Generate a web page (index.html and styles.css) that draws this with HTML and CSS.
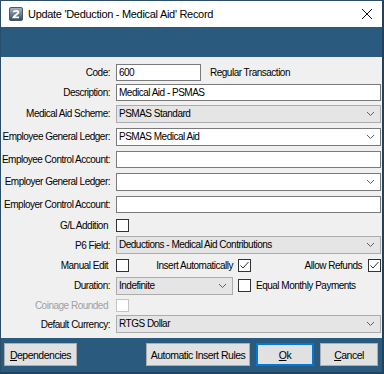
FILE: index.html
```html
<!DOCTYPE html>
<html lang="en">
<head>
  <meta charset="UTF-8">
  <title>Update 'Deduction - Medical Aid' Record</title>
  <link rel="stylesheet" href="styles.css">
</head>
<body>
  <div class="window">
    <div class="titlebar">
      <svg class="app-icon" width="14" height="14" viewBox="0 0 14 14">
        <defs>
          <linearGradient id="ig" x1="0" y1="0" x2="0" y2="1">
            <stop offset="0" stop-color="#a9b6c4"/>
            <stop offset="1" stop-color="#33475c"/>
          </linearGradient>
        </defs>
        <rect x="0.5" y="0.5" width="13" height="13" rx="1.5" fill="url(#ig)" stroke="#4a5a6b"/>
        <path d="M4.5 5.2 C5 3.4 9.6 3.2 9.4 5.4 C9.2 7 6 7.8 4.6 10.3 L10 10.3" fill="none" stroke="#fff" stroke-width="1.8"/>
      </svg>
      <span class="title">Update 'Deduction - Medical Aid' Record</span>
      <svg class="close" width="12" height="12" viewBox="0 0 12 12">
        <path d="M1 1 L11 11 M11 1 L1 11" stroke="#111" stroke-width="1"/>
      </svg>
    </div>
    <div class="banner"></div>

    <div class="record-form">
      <span class="lbl">Code:</span>
      <div class="field">
        <span class="txt code">600</span>
        <span class="note">Regular Transaction</span>
      </div>

      <span class="lbl">Description:</span>
      <div class="field"><span class="txt wide">Medical Aid - PSMAS</span></div>

      <span class="lbl">Medical Aid Scheme:</span>
      <div class="field">
        <div class="combo gray wide">PSMAS Standard<svg class="chev" width="7" height="4" viewBox="0 0 7 4"><path d="M0 0 L3.5 3.5 L7 0" fill="none" stroke="#606060"/></svg></div>
      </div>

      <span class="lbl">Employee General Ledger:</span>
      <div class="field">
        <div class="combo wide">PSMAS Medical Aid<svg class="chev" width="7" height="4" viewBox="0 0 7 4"><path d="M0 0 L3.5 3.5 L7 0" fill="none" stroke="#606060"/></svg></div>
      </div>

      <span class="lbl">Employee Control Account:</span>
      <div class="field"><span class="txt wide"></span></div>

      <span class="lbl">Employer General Ledger:</span>
      <div class="field">
        <div class="combo wide"><svg class="chev" width="7" height="4" viewBox="0 0 7 4"><path d="M0 0 L3.5 3.5 L7 0" fill="none" stroke="#606060"/></svg></div>
      </div>

      <span class="lbl">Employer Control Account:</span>
      <div class="field"><span class="txt wide"></span></div>

      <span class="lbl chk-lbl">G/L Addition</span>
      <div class="field"><span class="chk"></span></div>

      <span class="lbl">P6 Field:</span>
      <div class="field">
        <div class="combo gray wide">Deductions - Medical Aid Contributions<svg class="chev" width="7" height="4" viewBox="0 0 7 4"><path d="M0 0 L3.5 3.5 L7 0" fill="none" stroke="#606060"/></svg></div>
      </div>

      <span class="lbl chk-lbl">Manual Edit</span>
      <div class="field split">
        <div class="pair">
          <span class="chk"></span>
          <span>Insert Automatically</span>
        </div>
        <div class="pair">
          <span class="chk on"><svg width="11" height="11" viewBox="0 0 11 11"><path d="M1.5 5.5 L4 8 L9.5 2" fill="none" stroke="#333" stroke-width="1"/></svg></span>
          <span class="refunds">Allow Refunds <span class="chk on"><svg width="11" height="11" viewBox="0 0 11 11"><path d="M1.5 5.5 L4 8 L9.5 2" fill="none" stroke="#333" stroke-width="1"/></svg></span></span>
        </div>
      </div>

      <span class="lbl">Duration:</span>
      <div class="field split">
        <div class="combo gray">Indefinite<svg class="chev" width="7" height="4" viewBox="0 0 7 4"><path d="M0 0 L3.5 3.5 L7 0" fill="none" stroke="#606060"/></svg></div>
        <div class="pair start">
          <span class="chk"></span>
          <span>Equal Monthly Payments</span>
        </div>
      </div>

      <span class="lbl chk-lbl disabled">Coinage Rounded</span>
      <div class="field"><span class="chk off"></span></div>

      <span class="lbl">Default Currency:</span>
      <div class="field">
        <div class="combo gray wide">RTGS Dollar<svg class="chev" width="7" height="4" viewBox="0 0 7 4"><path d="M0 0 L3.5 3.5 L7 0" fill="none" stroke="#606060"/></svg></div>
      </div>
    </div>

    <div class="button-bar">
      <button class="btn deps"><u>D</u>ependencies</button>
      <span class="spacer"></span>
      <button class="btn rules">Automatic Insert Rules</button>
      <button class="btn ok"><u>O</u>k</button>
      <button class="btn cancel"><u>C</u>ancel</button>
    </div>
  </div>
</body>
</html>
```

FILE: styles.css
```css
* {
  margin: 0;
  padding: 0;
  box-sizing: border-box;
}

body {
  font-family: "Liberation Sans", Arial, sans-serif;
  font-size: 10px;
  letter-spacing: -0.5px;
  color: #000;
  background: #1f4a6b;
}

.window {
  width: 384px;
  height: 374px;
  border-top: 1px solid #2a4d6a;
  border-left: 1px solid #2a4d6a;
  border-right: 2px solid #22415b;
  border-bottom: 2px solid #22415b;
  display: flex;
  flex-direction: column;
  background: #f0f0f0;
}

.titlebar {
  height: 26px;
  background: #fff;
  display: flex;
  align-items: center;
  padding-left: 8px;
}

.app-icon {
  flex: none;
}

.title {
  margin-left: 5px;
  font-size: 11px;
  letter-spacing: -0.3px;
  flex: 1;
}

.close {
  margin-right: 9px;
}

.banner {
  height: 30px;
  background: #2a5a7e;
}

.record-form {
  display: grid;
  grid-template-columns: 109px 1fr;
  grid-template-rows: 20px 20px 23px 23px 22px 23px 22px 20px 20px 21px 19px 20px 18px;
  column-gap: 6px;
  padding: 5px 1px 5px 0;
  height: 281px;
}

.lbl {
  text-align: right;
  align-self: center;
  white-space: nowrap;
}

.chk-lbl {
  padding-right: 2px;
}

.disabled {
  color: #a0a0a0;
}

.field {
  display: flex;
  align-items: center;
  white-space: nowrap;
}

.txt {
  display: block;
  height: 17px;
  line-height: 15px;
  border: 1px solid #7a7a7a;
  background: #fff;
  padding-left: 2px;
}

.code {
  width: 85px;
}

.wide {
  flex: 1;
}

.note {
  margin-left: 9px;
}

.combo {
  position: relative;
  height: 18px;
  line-height: 16px;
  border: 1px solid #7a7a7a;
  background: #fff;
  padding-left: 2px;
}

.combo.gray {
  background: #e5e5e5;
  border-color: #acacac;
}

.chev {
  position: absolute;
  right: 6px;
  top: 6px;
}

.chk {
  display: inline-flex;
  align-items: center;
  justify-content: center;
  width: 13px;
  height: 13px;
  border: 1px solid #333;
  background: #fff;
  flex: none;
}

.chk.off {
  border-color: #c4c4c4;
}

.split {
  display: grid;
  grid-template-columns: 117px 1fr;
  column-gap: 5px;
}

.pair {
  display: flex;
  align-items: center;
  justify-content: space-between;
}

.pair.start {
  justify-content: flex-start;
  gap: 5px;
}

.refunds {
  display: flex;
  align-items: center;
  gap: 6px;
}

.button-bar {
  flex: 1;
  background: #2a5a7e;
  display: flex;
  align-items: flex-start;
  gap: 6px;
  padding: 5px 4px 0 3px;
}

.spacer {
  flex: 1;
}

.btn {
  height: 23px;
  font-family: inherit;
  font-size: 10.5px;
  letter-spacing: -0.5px;
  white-space: nowrap;
  color: #000;
  background: #e1e1e1;
  border: 1px solid #adadad;
}

.deps {
  width: 73px;
}

.rules {
  width: 104px;
}

.ok {
  width: 58px;
  border: 2px solid #0078d7;
}

.cancel {
  width: 58px;
}
```
